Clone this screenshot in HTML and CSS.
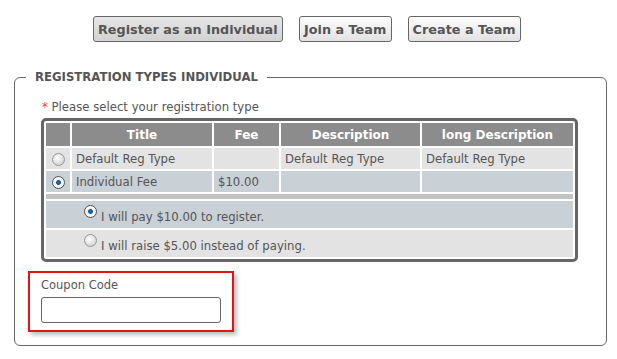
FILE: index.html
```html
<!DOCTYPE html>
<html lang="en">

<head>
  <meta charset="UTF-8" />
  <title>Registration</title>
  <link rel="stylesheet" href="styles.css">
</head>

<body>
  <div class="tabs">
    <button class="tab active">Register as an Individual</button>
    <button class="tab join">Join a Team</button>
    <button class="tab">Create a Team</button>
  </div>

  <fieldset class="reg-box">
    <legend>REGISTRATION TYPES INDIVIDUAL</legend>

    <p class="hint"><span class="req">*</span> Please select your registration type</p>

    <table class="reg-table">
      <thead>
        <tr>
          <th class="col-radio"></th>
          <th class="col-title">Title</th>
          <th class="col-fee">Fee</th>
          <th class="col-desc">Description</th>
          <th class="col-long">long Description</th>
        </tr>
      </thead>
      <tbody>
        <tr class="light">
          <td class="col-radio"><span class="radio"></span></td>
          <td>Default Reg Type</td>
          <td></td>
          <td>Default Reg Type</td>
          <td>Default Reg Type</td>
        </tr>
        <tr class="blue">
          <td class="col-radio"><span class="radio checked"></span></td>
          <td>Individual Fee</td>
          <td>$10.00</td>
          <td></td>
          <td></td>
        </tr>
        <tr class="sep">
          <td colspan="5"></td>
        </tr>
        <tr class="blue option">
          <td colspan="5"><span class="radio checked"></span>I will pay $10.00 to register.</td>
        </tr>
        <tr class="light option">
          <td colspan="5"><span class="radio"></span>I will raise $5.00 instead of paying.</td>
        </tr>
      </tbody>
    </table>

    <div class="coupon">
      <label for="coupon">Coupon Code</label>
      <input type="text" id="coupon" name="coupon" />
    </div>
  </fieldset>
</body>

</html>
```

FILE: styles.css
```css
body {
  font-family: "DejaVu Sans", Verdana, sans-serif;
  font-size: 11.7px;
  color: #555;
  margin: 0;
  padding: 16px 0 0 14px;
  width: 593px;
  background: #fff;
}

.tabs {
  display: flex;
  gap: 16px;
  padding-left: 79px;
}

.tab {
  font-family: "DejaVu Sans", Verdana, sans-serif;
  font-size: 12.8px;
  font-weight: bold;
  color: #555;
  height: 26px;
  padding: 0 4px;
  border: 1px solid #666;
  border-radius: 3px;
  background: linear-gradient(#fdfdfd, #e2e2e2);
}

.tab.active {
  background: linear-gradient(#e6e6e6, #d2d2d2);
}

.tab.join {
  min-width: 93px;
}

.reg-box {
  margin: 28px 0 0 0;
  padding: 8px 27px 13px 27px;
  border: 1px solid #666;
  border-radius: 6px;
}

.reg-box legend {
  margin-left: -16px;
  padding: 0 9px;
  font-weight: bold;
  font-size: 11.7px;
  color: #555;
}

.hint {
  margin: 8px 0 4px 0;
}

.req {
  color: #e44;
}

.reg-table {
  width: 537px;
  border: 3px solid #666;
  border-radius: 5px;
  border-spacing: 2px;
  margin-left: -1px;
}

.reg-table th {
  background: #8c8c8c;
  color: #fff;
  font-size: 12px;
  font-weight: bold;
  height: 23px;
  padding: 0;
}

.reg-table td {
  height: 21px;
  padding: 0 4px;
}

.col-radio { width: 16px; }
.col-title { width: 140px; }
.col-fee { width: 65px; }
.col-desc { width: 139px; }

.reg-table td.col-radio {
  text-align: center;
}

.light td {
  background: #e3e3e3;
}

.blue td {
  background: #c9d0d6;
}

.sep td {
  height: 5px;
  padding: 0;
  background: #c2c2c2;
}

.option td {
  height: 27px;
  padding: 0 0 0 38px;
}

.option .radio {
  vertical-align: 3px;
  margin-right: 4px;
}

.radio {
  display: inline-block;
  width: 11px;
  height: 11px;
  border: 1px solid #999;
  border-radius: 50%;
  background: radial-gradient(circle at 40% 35%, #fff, #ddd 60%, #bbb);
  vertical-align: middle;
}

.radio.checked {
  border-color: #555;
  background: radial-gradient(circle at 50% 50%, #1d74b8 0, #0b4f8a 25%, #e8e8e8 36%, #fff 60%, #bbb);
}

.coupon {
  width: 180px;
  margin: 9px 0 0 -14px;
  padding: 5px 11px 7px 11px;
  border: 2px solid #e21414;
  box-shadow: 3px 3px 4px rgba(0, 0, 0, 0.25);
}

.coupon label {
  display: block;
  font-size: 11.5px;
  margin-bottom: 5px;
}

.coupon input {
  width: 180px;
  height: 26px;
  box-sizing: border-box;
  border: 1px solid #666;
  border-radius: 3px;
}
```
